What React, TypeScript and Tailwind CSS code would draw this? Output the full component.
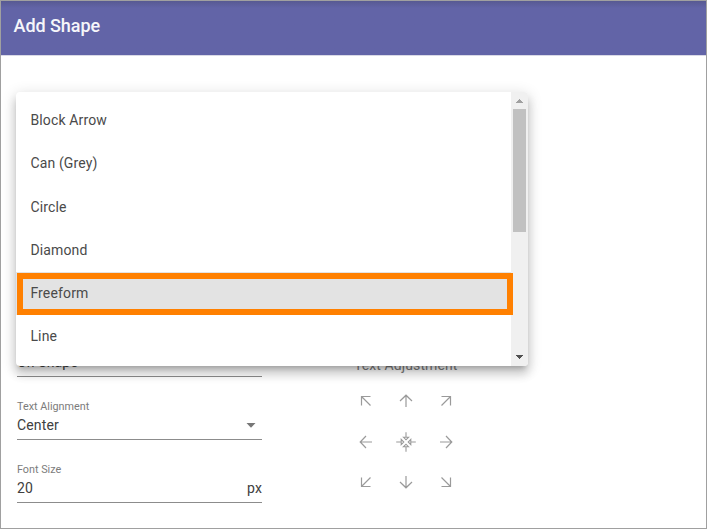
import React from "react";

const SHAPES = ["Block Arrow", "Can (Grey)", "Circle", "Diamond", "Freeform", "Line"];

const ARROWS: (number | null)[] = [-45, 0, 45, -90, null, 90, -135, 180, 135];

function Arrow({ angle }: { angle: number }) {
  const diagonal = angle % 90 !== 0;
  return (
    <svg width="16" height="16" viewBox="-8 -8 16 16" fill="none" stroke="#9a9a9a" strokeWidth="1.2">
      {diagonal ? (
        <g transform={`rotate(${angle - 45})`}>
          <path d="M-4.5 4.5L4.5 -4.5M-4.5 -4.5H4.5V4.5" />
        </g>
      ) : (
        <g transform={`rotate(${angle})`}>
          <path d="M0 6V-5.5M-6 0L0 -5.8L6 0" />
        </g>
      )}
    </svg>
  );
}

function CenterIcon() {
  return (
    <svg width="20" height="20" viewBox="-10 -10 20 20" fill="none" stroke="#9a9a9a" strokeWidth="1.1">
      {[0, 90, 180, 270].map((a) => (
        <path key={a} transform={`rotate(${a})`} d="M0 -9.8V-4.8M-2.6 -4.8L0 -2.2L2.6 -4.8Z" />
      ))}
    </svg>
  );
}

function Field({ label, value, children }: { label?: string; value: string; children?: React.ReactNode }) {
  return (
    <div className="flex h-[63px] w-[245px] flex-col justify-end border-b border-[#8c8c8c]">
      {label && <div className="h-[14px] text-[10.8px] leading-[14px] text-[#7c7c7c]">{label}</div>}
      <div className="flex h-[25px] items-start justify-between pt-px text-[14px] leading-[20px] tracking-[0.15px] text-[#404040]">
        <span>{value}</span>
        {children}
      </div>
    </div>
  );
}

export default function App() {
  return (
    <div className="relative flex h-[529px] w-[707px] flex-col overflow-hidden border border-[#a0a0a0] bg-white font-['Roboto',sans-serif]">
      <header className="flex h-[55px] shrink-0 items-center border-b border-[#d9d9e6] bg-[#6264a7] bg-linear-to-b from-[#575992] to-[#6264a7] to-[7px] pb-[6px] pl-[12.5px] text-[18px] font-medium tracking-[-0.05px] text-[#f6f6fa]">
        Add Shape
      </header>
      <main className="flex pt-[258px] pl-[16px]">
        <section className="w-[337px]">
          <Field value="On Shape" />
          <Field label="Text Alignment" value="Center">
            <svg className="mt-[8px] mr-[6px]" width="10" height="5" viewBox="0 0 10 5">
              <path d="M0.5 0H9.5L5 4.8Z" fill="#777" />
            </svg>
          </Field>
          <Field label="Font Size" value="20">
            <span>px</span>
          </Field>
        </section>
        <section className="pt-[41px]">
          <div className="h-[26px] text-[14px] leading-[20px] tracking-[0.1px] text-[#7c7c7c]">Text Adjustment</div>
          <div className="grid w-[121.2px] grid-cols-3">
            {ARROWS.map((a, i) => (
              <div key={i} className="flex h-[40.5px] items-center justify-center pr-[17px]">
                <div className="flex shrink-0">{a === null ? <CenterIcon /> : <Arrow angle={a} />}</div>
              </div>
            ))}
          </div>
        </section>
      </main>

      <div className="absolute top-[91px] left-[15px] flex h-[274px] w-[512px] overflow-hidden rounded-[4px] bg-white shadow-[0_5px_5px_-3px_rgba(0,0,0,0.2),0_8px_10px_1px_rgba(0,0,0,0.14),0_3px_14px_2px_rgba(0,0,0,0.12)]">
        <ul className="w-[495px] pt-[6.8px]">
          {SHAPES.map((s) => (
            <li
              key={s}
              className={`flex h-[43.2px] items-center pt-[0.5px] pl-[14.4px] text-[14px] tracking-[0.15px] text-[#4a4a4a] ${s === "Freeform" ? "bg-[#e3e3e3]" : ""}`}
            >
              {s}
            </li>
          ))}
        </ul>
        <div className="flex w-[17px] flex-col items-center justify-between bg-[#f0f0f0] pt-[7px] pb-[7px]">
          <svg width="7" height="4" viewBox="0 0 7 4" shapeRendering="crispEdges">
            <path d="M0 4V3H1V2H2V1H3V0H4V1H5V2H6V3H7V4Z" fill="#a0a0a0" />
          </svg>
          <div className="mt-[6px] mr-[1px] mb-auto h-[123px] w-[13px] bg-[#c1c1c1]" />
          <svg width="7" height="4" viewBox="0 0 7 4" shapeRendering="crispEdges">
            <path d="M0 0V1H1V2H2V3H3V4H4V3H5V2H6V1H7V0Z" fill="#505050" />
          </svg>
        </div>
      </div>
      <div className="absolute top-[272px] left-[16px] h-[42px] w-[496px] border-[6px] border-[#ff8000]" />
    </div>
  );
}
